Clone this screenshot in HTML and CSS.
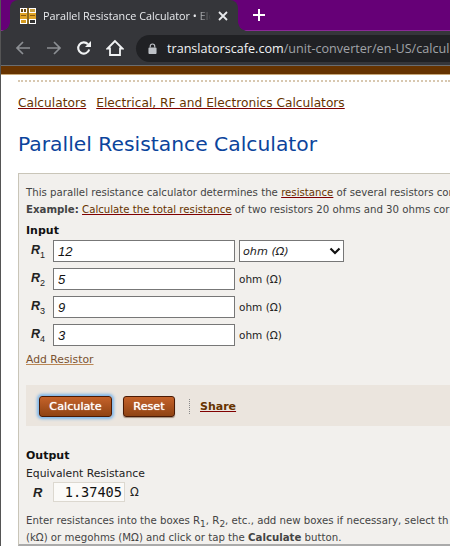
FILE: index.html
```html
<!DOCTYPE html>
<html lang="en">
<head>
<meta charset="utf-8">
<title>Parallel Resistance Calculator</title>
<link rel="stylesheet" href="styles.css">
</head>
<body>
<div class="window">
  <div class="tabstrip">
    <div class="tab">
      <svg class="favicon" width="16" height="16" viewBox="0 0 16 16"><rect width="16" height="16" fill="#fff"/><rect x="0" y="5" width="16" height="6" fill="#e0a526"/><rect x="1" y="1" width="2" height="3" fill="#6b4a10"/><rect x="4" y="1" width="2" height="3" fill="#6b4a10"/><rect x="7" y="0" width="2" height="16" fill="#8a6a20"/><rect x="1" y="7" width="5" height="1" fill="#8a5a10"/><rect x="10" y="7" width="5" height="1" fill="#8a5a10"/><rect x="1" y="12" width="5" height="3" fill="#d49a20"/><rect x="10" y="12" width="5" height="3" fill="#333"/><rect x="10" y="1" width="5" height="3" fill="#c9a040"/></svg>
      <span class="tab-title">Parallel Resistance Calculator • Ele</span>
      <svg class="tab-close" width="10" height="10" viewBox="0 0 10 10"><path d="M1 1 9 9M9 1 1 9" stroke="#e8eaed" stroke-width="1.800"/></svg>
    </div>
    <svg class="new-tab" width="14" height="14" viewBox="0 0 14 14"><path d="M7 1V13M1 7H13" stroke="#fff" stroke-width="2"/></svg>
  </div>
  <div class="toolbar">
    <svg class="nav nav-back" width="16" height="16" viewBox="0 0 16 16"><path d="M15 8H2M8 2 2 8l6 6" fill="none" stroke="#8c8f93" stroke-width="1.700"/></svg>
    <svg class="nav nav-forward" width="16" height="16" viewBox="0 0 16 16"><path d="M1 8H14M8 2l6 6-6 6" fill="none" stroke="#8c8f93" stroke-width="1.700"/></svg>
    <svg class="nav nav-reload" width="16" height="16" viewBox="0 0 16 16"><path d="M13.200 9.500A5.600 5.600 0 1 1 12 4.300" fill="none" stroke="#f1f3f4" stroke-width="2.100"/><path d="M15 1v6H9z" fill="#f1f3f4"/></svg>
    <svg class="nav nav-home" width="18" height="18" viewBox="0 0 18 18"><path d="M9 2 1.500 9.500H4V16H14V9.500H16.500Z" fill="none" stroke="#f1f3f4" stroke-width="1.800"/></svg>
    <div class="omnibox">
      <svg class="lock" width="9" height="11" viewBox="0 0 10 12"><path d="M2.500 5V3.500a2.500 2.500 0 0 1 5 0V5" fill="none" stroke="#bdc1c6" stroke-width="1.300"/><rect x="0.500" y="5" width="9" height="7" rx="1" fill="#bdc1c6"/></svg>
      <span class="url"><span class="domain">translatorscafe.com</span>/unit-converter/en-US/calcul</span>
    </div>
  </div>
  <div class="brand-bar"></div>
  <main class="page">
    <div class="dots"></div>
    <nav class="crumbs"><a href="#">Calculators</a><a href="#">Electrical, RF and Electronics Calculators</a></nav>
    <h1>Parallel Resistance Calculator</h1>
    <section class="panel">
      <p class="intro">This parallel resistance calculator determines the <a href="#">resistance</a> of several resistors cor</p>
      <p class="intro"><b>Example:</b> <a href="#">Calculate the total resistance</a> of two resistors 20 ohms and 30 ohms cor</p>
      <h2 class="input-title">Input</h2>
      <div class="rows">
        <div class="row"><span class="r-label"><i>R</i><sub>1</sub></span><input class="r-input" value="12"><div class="unit-select"><span>ohm (Ω)</span><svg width="12" height="8" viewBox="0 0 12 8"><path d="M1.500 1.500 6 6l4.500-4.500" fill="none" stroke="#111" stroke-width="2.200"/></svg></div></div>
        <div class="row"><span class="r-label"><i>R</i><sub>2</sub></span><input class="r-input" value="5"><span class="unit">ohm (Ω)</span></div>
        <div class="row"><span class="r-label"><i>R</i><sub>3</sub></span><input class="r-input" value="9"><span class="unit">ohm (Ω)</span></div>
        <div class="row"><span class="r-label"><i>R</i><sub>4</sub></span><input class="r-input" value="3"><span class="unit">ohm (Ω)</span></div>
      </div>
      <a class="add" href="#">Add Resistor</a>
      <div class="actions">
        <button class="btn btn-focus">Calculate</button>
        <button class="btn">Reset</button>
        <span class="divider"></span>
        <a class="share" href="#">Share</a>
      </div>
      <h2 class="output-title">Output</h2>
      <div class="eq">Equivalent Resistance</div>
      <div class="result"><b><i>R</i></b><output class="value">1.37405</output><span class="omega">Ω</span></div>
      <p class="note">Enter resistances into the boxes R<sub>1</sub>, R<sub>2</sub>, etc., add new boxes if necessary, select th<br>(kΩ) or megohms (MΩ) and click or tap the <b>Calculate</b> button.</p>
    </section>
  </main>
</div>
</body>
</html>
```
FILE: styles.css
```css
* { box-sizing: border-box; }
html, body { margin: 0; padding: 0; height: 546px; overflow: hidden; background: #fff; }
body { font-family: "DejaVu Sans", Verdana, sans-serif; font-size: 11px; color: #444; }
.window { width: 450px; height: 546px; overflow: hidden; display: flex; flex-direction: column; border-left: 1px solid #555; }
.tabstrip { height: 31px; background: #660077; border-bottom: 1px solid #8a2a96; display: flex; align-items: flex-end; flex: none; padding-left: 9px; }
.tab { width: 228px; height: 31px; margin-bottom: -1px; background: #35363a; border-radius: 8px 8px 0 0; display: flex; align-items: center; padding: 0 10px; color: #e8eaed; position: relative; font-family: "Open Sans", "Liberation Sans", sans-serif; }
.tab::before, .tab::after { content: ""; position: absolute; bottom: 0; width: 9px; height: 9px; }
.tab::before { left: -9px; background: radial-gradient(circle at 0 0, transparent 8.500px, #35363a 9px); }
.tab::after { right: -9px; background: radial-gradient(circle at 100% 0, transparent 8.500px, #35363a 9px); }
.favicon { flex: none; margin-right: 7px; }
.tab-title { font-size: 10.800px; white-space: nowrap; overflow: hidden; flex: 1; min-width: 0; mask-image: linear-gradient(to left, transparent 0, #000 16px); }
.tab-close { flex: none; margin-left: 7px; margin-right: 0; }
.new-tab { align-self: center; margin-left: 14px; }
.toolbar { height: 35px; flex: none; background: #35363a; display: flex; align-items: center; padding-left: 14px; border-bottom: 1px solid #6a6d70; }
.nav { flex: none; }
.nav-back { margin-right: 15px; }
.nav-forward { margin-right: 14px; }
.nav-reload { margin-right: 14px; }
.nav-home { margin-right: 12px; }
.omnibox { flex: 1; height: 27px; background: #202124; border-radius: 14px 0 0 14px; display: flex; align-items: center; padding-left: 12px; overflow: hidden; white-space: nowrap; font-family: "Open Sans", "Liberation Sans", sans-serif; font-size: 12.600px; color: #a0a4a8; }
.lock { flex: none; margin-right: 10px; }
.domain { color: #f1f3f4; }
.brand-bar { height: 9px; flex: none; background: #663300; border-bottom: 1px solid #c9a878; }
.page { flex: 1; min-height: 0; padding: 5px 0 0 17px; overflow: hidden; }
.dots { height: 2px; border-top: 2px dotted #d8c8b0; margin-left: 0; }
.crumbs { margin-top: 14px; display: flex; gap: 10px; font-size: 12.200px; line-height: 15px; white-space: nowrap; }
a { color: #663300; text-decoration: underline; text-decoration-color: #800000; }
h1 { margin: 18px 0 0; font-size: 20.300px; font-weight: 400; color: #0b449c; white-space: nowrap; line-height: 30px; }
.panel { margin-top: 14px; width: 433px; height: 373px; background: #f2f0ed; border-top: 1px solid #c9c5b8; border-left: 1px solid #c9c5b8; border-bottom: 2px solid #aaa; padding: 10px 0 0 7px; white-space: nowrap; overflow: hidden; font-size: 10.200px; }
.intro { margin: 0; line-height: 17px; }
.input-title, .output-title { margin: 0; font-size: 11px; font-weight: 700; color: #111; line-height: 14px; }
.input-title { margin-top: 6px; }
.rows { margin-top: 2px; display: flex; flex-direction: column; gap: 6px; }
.row { display: flex; align-items: center; height: 22px; }
.r-label { width: 27px; padding-left: 5px; color: #222; font-family: "Liberation Sans", sans-serif; font-size: 12.500px; font-weight: 700; }
.r-label sub { font-size: 9px; font-weight: 400; }
.r-input { width: 182px; height: 22px; border: 1px solid #777; border-radius: 0; padding: 0 4px; font-family: "Liberation Sans", sans-serif; font-style: italic; font-size: 13px; color: #111; background: #fff; }
.unit { margin-left: 4px; color: #222; font-size: 10.500px; }
.unit-select { margin-left: 4px; width: 105px; height: 22px; background: #fff; border: 1px solid #777; display: flex; align-items: center; justify-content: space-between; padding: 0 2px 0 3px; font-style: italic; color: #222; font-size: 11.200px; }
.add { display: block; margin-top: 7px; font-size: 10.800px; text-decoration-color: #bb8855; color: #7a5230; }
.actions { margin: 19px 0 0 0; height: 41px; background: #ebe5de; display: flex; align-items: center; padding: 2px 0 0 13px; }
.btn { height: 21px; padding: 0; border: 1px solid #4a1a05; border-radius: 3px; background: linear-gradient(#c5622a, #8f4313); color: #fff; font-family: "DejaVu Sans", sans-serif; font-size: 11.200px; font-weight: 400; width: 52px; margin-right: 11px; box-shadow: 0 1px 1px #a08a78; text-shadow: 0 0 1px #fff; }
.btn-focus { width: 73px; margin-right: 11px; box-shadow: 0 0 3px 2px #7db6ea; }
.divider { height: 15px; border-left: 1px dotted #888; margin-right: 10px; margin-left: 3px; }
.share { font-weight: 700; font-size: 11px; color: #663300; }
.output-title { margin-top: 23px; }
.eq { margin-top: 4px; color: #222; line-height: 14px; font-size: 10.800px; }
.result { display: flex; align-items: center; margin-top: 1px; height: 20px; color: #222; }
.result b { width: 27px; padding-left: 7px; font-family: "Liberation Sans", sans-serif; font-size: 13px; color: #222; }
.value { width: 72px; height: 20px; background: #fbfaf8; border: 1px solid #dcd8d0; font-family: "DejaVu Sans Mono", monospace; font-size: 13.600px; line-height: 18px; text-align: right; padding-right: 2px; color: #111; }
.omega { margin-left: 5px; font-size: 11.500px; }
.note { margin: 10px 0 0; line-height: 17px; }
.note sub { font-size: 9px; line-height: 0; }
```
